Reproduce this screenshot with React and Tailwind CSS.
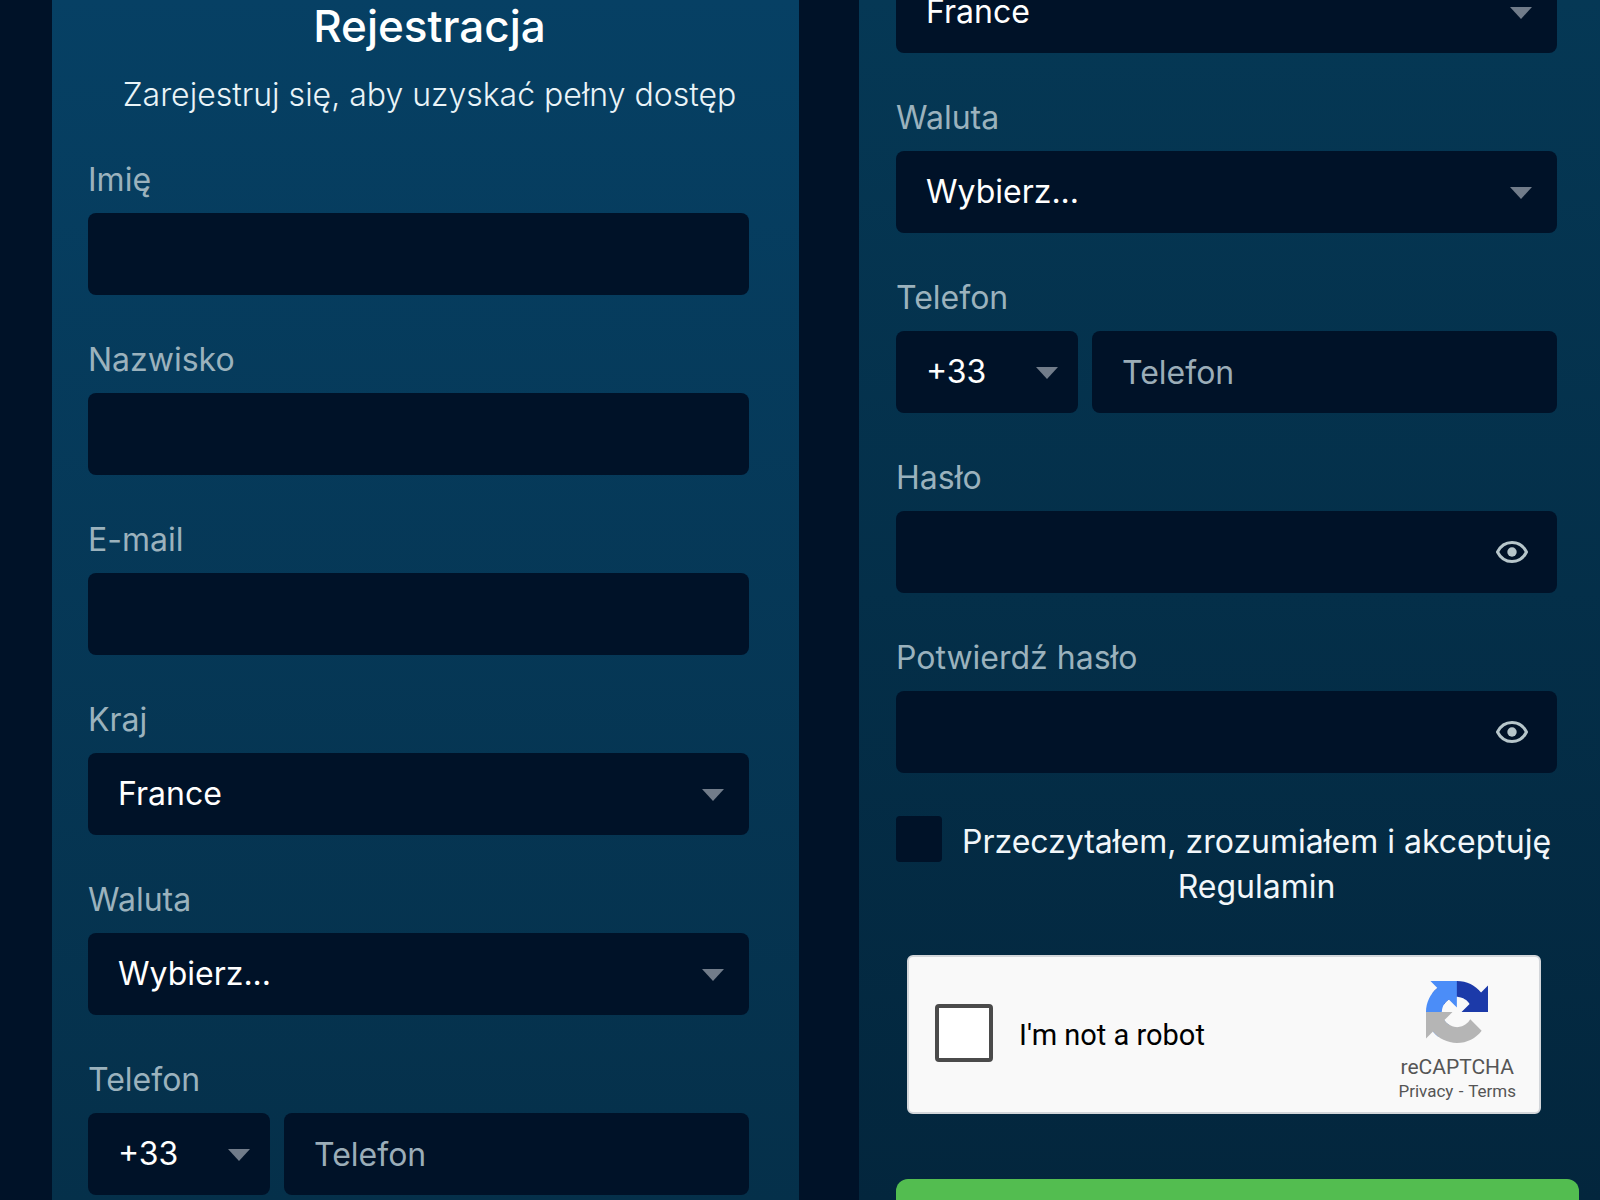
import { useState } from 'react';

const BOX = 'h-[82px] w-full rounded-lg bg-[#001228] text-[32px] text-white outline-none';

function Field({ id, label, children }) {
  return (
    <div>
      <label htmlFor={id} className="mb-[13px] block text-[32px] leading-10 text-[#9bb2bd]">{label}</label>
      {children}
    </div>
  );
}

function TextField({ id, label, type = 'text' }) {
  return (
    <Field id={id} label={label}>
      <input id={id} type={type} className={`${BOX} block px-[30px]`} />
    </Field>
  );
}

function Select({ id, options, compact, ...rest }) {
  return (
    <div className="relative">
      <select id={id} className={`${BOX} block appearance-none pl-[30px]`} {...rest}>
        {options.map(o => <option key={o}>{o}</option>)}
      </select>
      <svg viewBox="0 0 22 12" aria-hidden="true"
        className={`pointer-events-none absolute top-9 h-3 w-[22px] ${compact ? 'right-5' : 'right-[25px]'}`}>
        <path d="M0 0h22L11 12z" fill="#717c8a" />
      </svg>
    </div>
  );
}

function SelectField({ id, label, options }) {
  return (
    <Field id={id} label={label}>
      <Select id={id} options={options} />
    </Field>
  );
}

function PhoneField({ id }) {
  return (
    <Field id={id} label="Telefon">
      <div className="grid grid-cols-[182px_1fr] gap-[14px]">
        <Select id={`${id}-prefix`} options={['+33', '+48', '+49']} compact aria-label="Prefiks" />
        <input id={id} type="tel" placeholder="Telefon" className={`${BOX} px-[30px] placeholder:text-[#9badb8]`} />
      </div>
    </Field>
  );
}

function PasswordField({ id, label }) {
  const [visible, setVisible] = useState(false);

  return (
    <Field id={id} label={label}>
      <div className="relative">
        <input id={id} type={visible ? 'text' : 'password'} className={`${BOX} block pl-[30px] pr-20`} />
        <button type="button" aria-label="Pokaż hasło" onClick={() => setVisible(v => !v)}
          className="absolute right-[29px] top-[30px]">
          <svg viewBox="0 0 32 22" className="block h-[22px] w-8" fill="none">
            <path d="M1.5 11C4.5 5 9.7 1.5 16 1.5S27.5 5 30.5 11C27.5 17 22.3 20.5 16 20.5S4.5 17 1.5 11z"
              stroke="#b6c6cb" strokeWidth="3" strokeLinejoin="round" />
            <circle cx="16" cy="11" r="4.7" fill="#b6c6cb" />
          </svg>
        </button>
      </div>
    </Field>
  );
}

function Captcha() {
  return (
    <div className="ml-[11px] mr-4 flex h-[159px] items-center rounded-md border-2 border-[#d3d6da] bg-[#f9f9f9] pl-[26px] pr-[23px] font-['Roboto',sans-serif]">
      <input id="robot" type="checkbox"
        className="mb-1 size-[58px] shrink-0 appearance-none rounded border-4 border-[#4b4b4b] bg-white checked:bg-[#4b8df8]" />
      <label htmlFor="robot" className="ml-[26px] flex-1 text-[29px] leading-8 text-black">I&apos;m not a robot</label>
      <div className="flex flex-col items-center pt-[14px] text-[#555]">
        <svg viewBox="0 0 64 64" className="size-[62px]" aria-hidden="true">
          <path fill="#1c3aa9" d="M64 31.955l-.013-1.37V4.687l-7.16 7.16C50.967 4.674 42.033.093 32.03.093c-10.4 0-19.642 4.96-25.458 12.64l11.736 11.86a15.55 15.55 0 0 1 4.754-5.334c2.05-1.6 4.952-2.906 8.968-2.906.485 0 .86.057 1.135.163 4.976.393 9.288 3.14 11.828 7.124l-8.307 8.307L64 31.953" />
          <path fill="#4b8df8" d="M31.862.094l-1.37.013H4.594l7.16 7.16C4.58 13.127 0 22.06 0 32.064c0 10.4 4.96 19.642 12.64 25.458L24.5 45.787a15.55 15.55 0 0 1-5.334-4.754c-1.6-2.05-2.906-4.952-2.906-8.968 0-.485.057-.86.163-1.135.393-4.976 3.14-9.288 7.124-11.828l8.307 8.307L31.86.095" />
          <path fill="#b5b5b5" d="M.001 32.045l.013 1.37v25.898l7.16-7.16c5.86 7.173 14.794 11.754 24.797 11.754 10.4 0 19.642-4.96 25.458-12.64l-11.736-11.86a15.55 15.55 0 0 1-4.754 5.334c-2.05 1.6-4.952 2.906-8.968 2.906-.485 0-.86-.057-1.135-.163-4.976-.393-9.288-3.14-11.828-7.124l8.307-8.307c-10.522.04-22.4.066-27.295-.005" />
        </svg>
        <span className="mt-3 text-[21px] leading-6">reCAPTCHA</span>
        <span className="text-[17px] leading-6">
          <a href="#privacy">Privacy</a> <span className="px-px">-</span> <a href="#terms">Terms</a>
        </span>
      </div>
    </div>
  );
}

export default function App() {
  return (
    <div className="grid h-screen grid-cols-[747fr_741fr] gap-[60px] overflow-hidden bg-[#001228] pl-[52px] font-['Inter',sans-serif]">

      {/* Top part of the form */}
      <section className="overflow-hidden bg-linear-to-b from-[#064064] to-[#05304a] pl-9 pr-7">
        <header className="mb-[45px] text-center">
          <h1 className="text-[44px] font-medium leading-[52px] text-white">Rejestracja</h1>
          <p className="mt-[23px] text-[32px] font-light leading-10 text-[#eaf4f8]">Zarejestruj się, aby uzyskać pełny dostęp</p>
        </header>
        <form className="flex flex-col gap-[45px] pr-[22px]">
          <TextField id="first-name" label="Imię" />
          <TextField id="last-name" label="Nazwisko" />
          <TextField id="email" label="E-mail" type="email" />
          <SelectField id="country" label="Kraj" options={['France', 'Polska']} />
          <SelectField id="currency" label="Waluta" options={['Wybierz...', 'EUR', 'PLN']} />
          <PhoneField id="phone" />
        </form>
      </section>

      {/* Rest of the form, scrolled down */}
      <section className="overflow-hidden bg-linear-to-b from-[#053855] to-[#03263d] pl-[37px] pr-[21px]">
        <form className="-mt-[29px]">
          <div className="flex flex-col gap-[45px] pr-[22px]">
            <Select id="country-2" options={['France', 'Polska']} aria-label="Kraj" />
            <SelectField id="currency-2" label="Waluta" options={['Wybierz...', 'EUR', 'PLN']} />
            <PhoneField id="phone-2" />
            <PasswordField id="password" label="Hasło" />
            <PasswordField id="password-confirm" label="Potwierdź hasło" />
          </div>

          <div className="mb-[46px] mt-[43px] flex items-start pr-[22px]">
            <input id="terms" type="checkbox"
              className="size-[46px] shrink-0 appearance-none rounded bg-[#001228] checked:bg-[#53bd50]" />
            <label htmlFor="terms" className="ml-[14px] flex-1 pt-[3px] text-center text-[32px] leading-[45px] text-[#f2f7fa]">
              Przeczytałem, zrozumiałem i akceptuję <a href="#regulamin">Regulamin</a>
            </label>
          </div>

          <div className="pr-[22px]">
            <Captcha />
          </div>

          <button type="submit" aria-label="Zarejestruj się" className="mt-[65px] h-[82px] w-full rounded-xl bg-[#53bd50]" />
        </form>
      </section>
    </div>
  );
}
